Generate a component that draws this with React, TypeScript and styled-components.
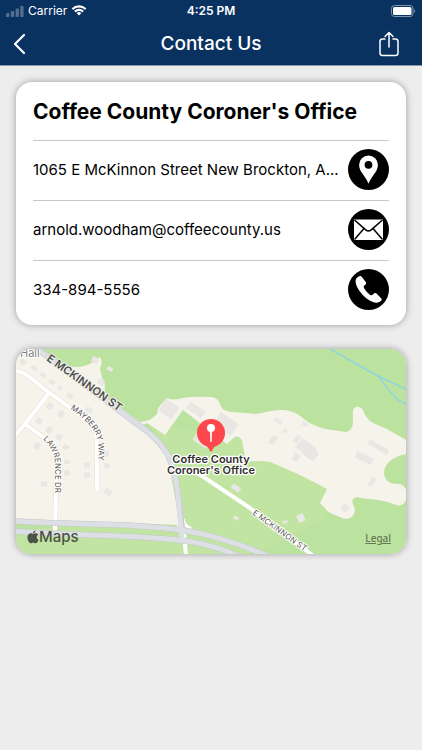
import React from "react";
import styled, { createGlobalStyle } from "styled-components";

const GlobalStyle = createGlobalStyle`
  *, *::before, *::after { box-sizing: border-box; }
  body {
    margin: 0;
    background: #ededed;
    color: #000;
    font-family: Inter, "Liberation Sans", sans-serif;
  }
`;

const Header = styled.header`
  background: #0a3260;
  border-bottom: 1px solid #8397b0;
  color: #fff;
`;

const StatusBar = styled.div`
  display: grid;
  grid-template-columns: 1fr auto 1fr;
  align-items: center;
  height: 22px;
  padding: 0 6px;
  font-size: 12px;
  line-height: 16px;
`;

const Signal = styled.div`
  display: flex;
  align-items: center;
  gap: 4px;
`;

const Clock = styled.time`
  font-weight: 600;
`;

const BatterySlot = styled.div`
  display: flex;
  justify-content: flex-end;
`;

const NavBar = styled.nav`
  display: grid;
  grid-template-columns: 1fr auto 1fr;
  align-items: center;
  height: 43px;
  padding: 0 12px;
`;

const NavTitle = styled.h1`
  margin: 0;
  font-size: 19px;
  line-height: 24px;
  font-weight: 500;
`;

const IconButton = styled.button<{ $end?: boolean }>`
  display: flex;
  justify-self: ${(p) => (p.$end ? "end" : "start")};
  padding: ${(p) => (p.$end ? "0 8px" : "0")};
  border: 0;
  background: none;
  color: inherit;
  cursor: pointer;
`;

const Page = styled.main`
  display: flex;
  flex-direction: column;
  gap: 24px;
  padding: 16px;
`;

const Card = styled.section`
  overflow: hidden;
  border-radius: 16px;
  background: #fff;
  box-shadow: 0 0 7px rgba(0, 0, 0, 0.35);
`;

const ContactCard = styled(Card)`
  padding: 0 17px 5px;
`;

const OfficeName = styled.h2`
  margin: 0;
  padding: 14px 0 12px;
  font-size: 21px;
  line-height: 32px;
  font-weight: 700;
  white-space: nowrap;
`;

const ContactRow = styled.a`
  display: flex;
  align-items: center;
  justify-content: space-between;
  gap: 8px;
  padding: 8px 0 10px;
  border-top: 1px solid #c8c8c8;
  color: inherit;
  font-size: 15px;
  line-height: 20px;
  text-decoration: none;
`;

const RowText = styled.span`
  overflow: hidden;
  white-space: nowrap;
  text-overflow: ellipsis;
`;

const RoundIcon = styled.svg`
  flex: none;
  width: 41px;
  height: 41px;
`;

const MapCard = styled(Card)`
  position: relative;
`;

const MapDrawing = styled.svg`
  display: block;
  width: 100%;
  height: auto;
  font-family: Inter, "Liberation Sans", sans-serif;
`;

const MapBrand = styled.div`
  position: absolute;
  left: 11px;
  bottom: 7px;
  display: flex;
  align-items: center;
  color: #4b5446;
  font-size: 15px;
  line-height: 20px;
  font-weight: 500;
`;

const LegalLink = styled.a`
  position: absolute;
  right: 15px;
  bottom: 10px;
  color: #657a56;
  font-family: "Noto Sans", sans-serif;
  font-size: 10px;
  line-height: 12px;
  font-weight: 500;
`;

const SignalBars = () => (
  <svg width="18" height="11" viewBox="0 0 18 11" fill="#526d90" aria-hidden="true">
    <rect x="0" y="7" width="3.4" height="4" rx="0.8" />
    <rect x="4.8" y="5" width="3.4" height="6" rx="0.8" />
    <rect x="9.6" y="2.6" width="3.4" height="8.4" rx="0.8" />
    <rect x="14.2" y="0" width="3.4" height="11" rx="0.8" />
  </svg>
);

const Wifi = () => (
  <svg width="16" height="12" viewBox="0 0 16 12" fill="#fff" aria-hidden="true">
    <path d="M8 2.4c2.2 0 4.2.9 5.7 2.3.1.1.3.1.4 0l1.1-1.1c.1-.1.1-.3 0-.4a10.400 10.400 0 0 0-14.400 0c-.1.1-.1.3 0 .4l1.100 1.100c.1.100.300.100.400 0A8.300 8.300 0 0 1 8 2.400z" />
    <path d="M8 6c1.200 0 2.300.450 3.200 1.200.100.100.300.100.400 0l1.100-1.100c.100-.100.100-.300 0-.400a6.900 6.900 0 0 0-9.400 0c-.100.100-.100.300 0 .400l1.100 1.100c.100.100.300.100.400 0C5.700 6.450 6.800 6 8 6z" />
    <path d="M10.200 8.300c.100-.100.100-.300 0-.400a3.400 3.400 0 0 0-4.400 0c-.100.100-.100.300 0 .400l1.900 2c.200.200.400.200.600 0z" />
  </svg>
);

const Battery = () => (
  <svg width="25" height="12" viewBox="0 0 25 12" aria-hidden="true">
    <rect x="0.500" y="0.500" width="21.500" height="11" rx="3" fill="none" stroke="#8195af" />
    <rect x="2" y="2" width="18.500" height="8" rx="1.600" fill="#fff" />
    <path d="M23.300 4v4c1.300-.500 1.300-3.500 0-4z" fill="#8195af" />
  </svg>
);

const AppleMark = () => (
  <svg width="12" height="14" viewBox="0 0 12 14" fill="currentColor" aria-hidden="true">
    <path d="M9.700 7.300c0-1.300.700-2.100 1.600-2.700-.600-.900-1.600-1.300-2.600-1.300-1.100-.100-2 .600-2.500.600S4.800 3.300 3.900 3.300C1.800 3.400.4 5 .4 7.400c0 2.800 1.900 5.900 3.500 5.900.8 0 1.200-.5 2.300-.5s1.400.5 2.300.5c1.400 0 2.600-2.100 3.100-3.400-1.200-.5-1.900-1.500-1.900-2.600z" />
    <path d="M8.400.5c-1.400.1-2.600 1.400-2.400 2.700 1.400 0 2.500-1.300 2.400-2.700z" />
  </svg>
);

const PinIcon = () => (
  <RoundIcon viewBox="0 0 41 41" aria-hidden="true">
    <circle cx="20.500" cy="20.500" r="20.500" />
    <path
      fill="#fff"
      fillRule="evenodd"
      d="M20.500 6.500a9.400 9.400 0 0 0-9.400 9.400c0 4 2.200 7 4.400 10.200 2 3 3.800 5.600 5 8.700 1.200-3.100 3-5.700 5-8.700 2.200-3.200 4.400-6.200 4.400-10.200a9.400 9.400 0 0 0-9.400-9.400zm0 5.400a3.900 3.900 0 1 1 0 7.800 3.900 3.900 0 0 1 0-7.800z"
    />
  </RoundIcon>
);

const MailIcon = () => (
  <RoundIcon viewBox="0 0 41 41" aria-hidden="true">
    <circle cx="20.500" cy="20.500" r="20.500" />
    <rect x="6" y="10.500" width="29" height="20.500" fill="#fff" />
    <path
      d="M6.500 11 17.800 20.900Q20.500 23.200 23.200 20.900L34.500 11M6.500 30.500 16 19.500M34.500 30.500 25 19.500"
      fill="none"
      stroke="#000"
      strokeWidth="1.500"
    />
  </RoundIcon>
);

const PhoneIcon = () => (
  <RoundIcon viewBox="0 0 41 41" aria-hidden="true">
    <circle cx="20.500" cy="20.500" r="20.500" />
    <path
      fill="#fff"
      d="M11.300 7.300c-2.700 1.100-4 3-3.700 5.700.7 6.900 8.700 16.600 17.200 20 3.200 1.200 6.800.8 8.500-1.400.6-.8.500-1.600-.2-2.300l-4.600-4.700c-.7-.7-1.700-.7-2.400-.1l-1.500 1.300c-.7.600-1.500.6-2.300.1-2.500-1.600-5-4.500-6.400-7.200-.4-.8-.2-1.500.4-2.100l1.300-1.200c.7-.6.7-1.400.3-2.100l-4-5.200c-.7-.9-1.500-1.300-2.600-.8z"
    />
  </RoundIcon>
);

const contacts = [
  {
    text: "1065 E McKinnon Street New Brockton, A...",
    href: "#directions",
    Icon: PinIcon,
  },
  {
    text: "arnold.woodham@coffeecounty.us",
    href: "mailto:arnold.woodham@coffeecounty.us",
    Icon: MailIcon,
  },
  { text: "334-894-5556", href: "tel:334-894-5556", Icon: PhoneIcon },
];

/* Building footprints: centre x, centre y, width, height, rotation. */
const buildings = [
  [23, 362, 6, 5, 35], [34, 368, 6, 4, 35], [43, 375, 6, 4, 35], [52, 382, 6, 4, 35],
  [60, 388, 5, 4, 35], [70, 396, 6, 4, 35], [89, 410, 7, 5, 35], [50, 406, 6, 6, 35],
  [61, 414, 6, 6, 35], [39, 421, 6, 6, 35], [49, 430, 6, 6, 35], [59, 437, 6, 6, 35],
  [66, 447, 6, 5, 35], [37, 446, 6, 6, 35], [95, 360, 7, 6, 30], [110, 369, 6, 4, 25],
  [101, 382, 7, 6, 30], [106, 454, 5, 6, 0], [107, 466, 6, 5, 5], [87, 465, 6, 5, -10],
  [87, 475, 6, 5, 0], [67, 462, 6, 4, 0], [67, 473, 6, 5, 0], [44, 484, 6, 5, 0],
  [108, 492, 8, 6, 30], [169, 409, 16, 14, 35], [196, 410, 18, 8, 35],
  [226, 424, 22, 14, 35], [202, 440, 16, 10, 35], [278, 421, 9, 4, 28],
  [285, 431, 4, 4, 30], [273, 440, 5, 10, 35], [305, 424, 6, 4, 30],
  [297, 439, 5, 9, 35], [306, 448, 18, 12, 35], [311, 454, 12, 10, 35],
  [296, 457, 6, 8, 25], [377, 446, 20, 5, 28], [364, 458, 18, 7, 25],
  [383, 450, 12, 5, 30], [372, 482, 5, 10, 35], [345, 508, 7, 7, 35],
  [301, 518, 7, 8, -25], [285, 522, 5, 3, -15], [236, 488, 9, 5, 35],
  [236, 518, 5, 3, 25],
];

const OfficeMap = () => (
  <MapDrawing viewBox="16 349 390 205" role="img" aria-label="Map of Coffee County Coroner's Office">
    <defs>
      <path id="main-street" d="M46 360 L126 417" />
      <path id="mayberry" d="M70 409 Q95 425 98 442 Q99 450 98 480" />
      <path id="lawrence" d="M43 439 Q54 450 55 462 L55 510" />
      <path id="side-street" d="M252 514 L319 562" />
    </defs>
    <rect x="16" y="349" width="390" height="205" fill="#bce29f" />
    <path d="M150 424 L250 440 L327 489 L325 518 L255 554 L16 554 V530 L182 520z" fill="#c2e4a3" />
    <path
      fill="#f6f3eb"
      d="M16 349 H36 L57 363 Q72 369 84 366 Q95 363 99 357 Q104 360 100 368 Q101 377 105 385 Q103 395 113 402 L140 422 Q151 421 157 414 L158 408 L167 398 Q174 401 182 398 Q197 396 211 397 Q216 397 219 402 C222 408 222 411 232 412 Q247 413 255 414 C265 413 270 410 281 410 C300 410 301 420 314 425 C325 430 335 430 345 432 C356 430 352 420 353 410 Q357 403 363 410 C368 423 374 423 387 429 L406 440 V454 C392 457 384 464 384 473 C385 484 395 484 400 484 Q405 486 406 490 V500 Q403 507 396 505 C383 500 378 500 370 499 C361 499 357 495 353 499 C351 504 355 506 355 511 C353 520 345 520 340 517 C330 513 327 512 325 508 L320 503 L327 489 Q300 474 270 462 Q260 460 246 462 L242 440 Q237 433 231 440 L227 444 L183 410 L165 435 L147 423 L143 425 L166 447 L180 525 L16 519z"
    />
    {buildings.map(([x, y, w, h, r], i) => (
      <rect
        key={i}
        x={x - w / 2}
        y={y - h / 2}
        width={w}
        height={h}
        fill="#e9e7e4"
        transform={`rotate(${r} ${x} ${y})`}
      />
    ))}
    <circle cx="312" cy="454" r="6" fill="#e9e7e4" />
    <g fill="none" stroke="#8ed5de" strokeWidth="1.500">
      <path d="M330 349 L378 376 L406 389" />
      <path d="M379 376 Q383 384 398 400 L406 404" />
    </g>
    <g fill="none" strokeLinecap="round" strokeLinejoin="round">
      <g stroke="#e3e0d9" strokeWidth="5">
        <path d="M12 371 Q22 371 27 375 L47 391 L73 410 Q96 425 97 439 V490" />
        <path d="M49 393 L25 424 L13 438 M25 424 L43 437 Q57 449 57 464 L55 529" />
      </g>
      <g stroke="#fff" strokeWidth="4">
        <path d="M12 371 Q22 371 27 375 L47 391 L73 410 Q96 425 97 439 V490" />
        <path d="M49 393 L25 424 L13 438 M25 424 L43 437 Q57 449 57 464 L55 529" />
        <path d="M193 470 L250 508 L316 558" />
        <path d="M183 520 L186 556" />
      </g>
      <path d="M178 527 Q182 526 182 516 Q183 525 190 528" stroke="#fff" strokeWidth="3" />
      <g stroke="#c5c8cc" strokeWidth="6">
        <path d="M32 345 L140 426 Q158 438 168 455 Q175 470 178 494 L182 528" />
        <path d="M12 521 C70 525 140 523 187 531 Q224 537 270 557" />
        <path d="M12 531 C65 536 140 534 187 541 Q218 546 240 557" />
      </g>
      <g stroke="#dcdfe3" strokeWidth="5">
        <path d="M32 345 L140 426 Q158 438 168 455 Q175 470 178 494 L182 540" />
        <path d="M12 521 C70 525 140 523 187 531 Q224 537 270 557" />
        <path d="M12 531 C65 536 140 534 187 541 Q218 546 240 557" />
      </g>
    </g>
    <g fill="#57564f" stroke="#fff" strokeWidth="2" strokeLinejoin="round" paintOrder="stroke" fontSize="8" fontWeight="400">
      <text x="20" y="357" fontSize="11" fill="#85847f">Hall</text>
      <text fontSize="11" fontWeight="600" fill="#4b4b48" stroke="#eff0ea">
        <textPath href="#main-street">E MCKINNON ST</textPath>
      </text>
      <text><textPath href="#mayberry">MAYBERRY WAY</textPath></text>
      <text><textPath href="#lawrence">LAWRENCE DR</textPath></text>
      <text><textPath href="#side-street">E MCKINNON ST</textPath></text>
    </g>
    <circle cx="211" cy="433" r="14" fill="#ff484e" />
    <path d="M204 443 Q209 448 210 451 Q211 452 212 451 Q213 448 218 443z" fill="#ff484e" />
    <circle cx="211" cy="428" r="4" fill="#fff" />
    <path d="M210 431 H212 L211.700 442 H210.300z" fill="#fff" />
    <g fill="#30302e" stroke="#fff" strokeWidth="2.500" strokeLinejoin="round" paintOrder="stroke" fontSize="11" fontWeight="600" textAnchor="middle">
      <text x="211" y="463">Coffee County</text>
      <text x="211" y="474">Coroner's Office</text>
    </g>
  </MapDrawing>
);

export default function App() {
  return (
    <>
      <GlobalStyle />
      <Header>
        <StatusBar>
          <Signal>
            <SignalBars />
            <span>Carrier</span>
            <Wifi />
          </Signal>
          <Clock>4:25 PM</Clock>
          <BatterySlot>
            <Battery />
          </BatterySlot>
        </StatusBar>
        <NavBar>
          <IconButton aria-label="Back">
            <svg width="14" height="22" viewBox="0 0 14 22" fill="none" stroke="currentColor" strokeWidth="2.200" strokeLinecap="round" strokeLinejoin="round">
              <path d="M12 2 3 11l9 9" />
            </svg>
          </IconButton>
          <NavTitle>Contact Us</NavTitle>
          <IconButton $end aria-label="Share">
            <svg width="26" height="26" viewBox="0 0 26 26" fill="none" stroke="currentColor" strokeWidth="1.500" strokeLinecap="round" strokeLinejoin="round">
              <path d="M9 8H6.500Q4 8 4 10.500V22q0 2.500 2.500 2.500h13Q22 24.500 22 22V10.500Q22 8 19.500 8H17M13 16V1.500M9 5.500l4-4 4 4" />
            </svg>
          </IconButton>
        </NavBar>
      </Header>
      <Page>
        <ContactCard>
          <OfficeName>Coffee County Coroner's Office</OfficeName>
          {contacts.map(({ text, href, Icon }) => (
            <ContactRow key={text} href={href}>
              <RowText>{text}</RowText>
              <Icon />
            </ContactRow>
          ))}
        </ContactCard>
        <MapCard>
          <OfficeMap />
          <MapBrand>
            <AppleMark />
            <span>Maps</span>
          </MapBrand>
          <LegalLink href="#legal">Legal</LegalLink>
        </MapCard>
      </Page>
    </>
  );
}
